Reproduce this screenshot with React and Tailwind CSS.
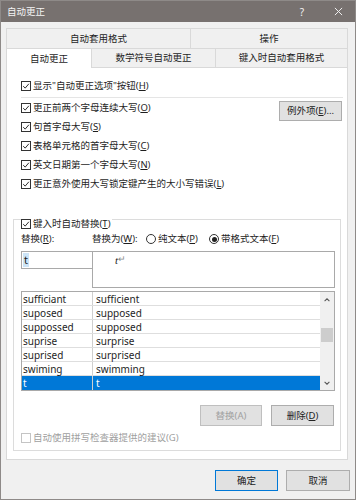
import { useState } from 'react'

const rows = [
  ['sufficiant', 'sufficient'],
  ['suposed', 'supposed'],
  ['suppossed', 'supposed'],
  ['suprise', 'surprise'],
  ['suprised', 'surprised'],
  ['swiming', 'swimming'],
  ['t', 't'],
]

function Check({ checked = true, disabled = false }) {
  return (
    <span className={`w-[10px] h-[10px] border bg-white flex items-center justify-center shrink-0 ${disabled ? 'border-[#c4c4c4]' : 'border-[#333333]'}`}>
      {checked && (
        <svg viewBox="0 0 10 10" className="w-[8px] h-[8px]">
          <path d="M1.5 5.2 L4 7.6 L8.6 2.2" fill="none" stroke="#222" strokeWidth="1.2" />
        </svg>
      )}
    </span>
  )
}

function Radio({ on = false }) {
  return (
    <span className="w-[10px] h-[10px] rounded-full border border-[#333333] bg-white flex items-center justify-center shrink-0">
      {on && <span className="w-[5px] h-[5px] rounded-full bg-[#222]" />}
    </span>
  )
}

function Option({ children, k, rest = '', checked = true, disabled = false }) {
  return (
    <div className={`h-[19px] flex items-center gap-[2px] ${disabled ? 'text-[#a0a0a0]' : ''}`}>
      <Check checked={checked} disabled={disabled} />
      <span>
        {children}(<u className="underline-offset-1">{k}</u>){rest}
      </span>
    </div>
  )
}

function Btn({ children, className = '', disabled = false }) {
  return (
    <button className={`h-[21px] bg-[#e1e1e1] border flex items-center justify-center ${disabled ? 'border-[#bfbfbf] text-[#a0a0a0]' : 'border-[#adadad] text-[#222]'} ${className}`}>
      {children}
    </button>
  )
}

export default function App() {
  const [sel, setSel] = useState(6)

  return (
    <div className="w-[356px] h-[500px] bg-[#f0f0f0] border border-[#8e8a88] flex flex-col font-['Noto_Sans','Noto_Sans_CJK_SC',sans-serif] text-[9.5px] text-[#1e1e1e] leading-none overflow-hidden">
      {/* title bar */}
      <div className="h-[21px] bg-[#77716f] text-[#f4f4f4] flex items-center pl-[6px] pr-[12px] shrink-0">
        <span className="text-[9.5px]">自动更正</span>
        <span className="ml-auto mr-[30px] text-[10px]">?</span>
        <svg viewBox="0 0 10 10" className="w-[9px] h-[9px]">
          <path d="M1 1 L9 9 M9 1 L1 9" stroke="#f0f0f0" strokeWidth="1.1" />
        </svg>
      </div>

      <div className="px-[5px] pt-[6px] flex flex-col">
        {/* tabs back row */}
        <div className="w-[342px] h-[20px] flex">
          <div className="w-[184px] border-t border-l border-[#d9d9d9] flex items-center justify-center">自动套用格式</div>
          <div className="flex-1 border-t border-l border-r border-[#d9d9d9] flex items-center justify-center">操作</div>
        </div>
        {/* tabs front row */}
        <div className="w-[342px] h-[20px] flex">
          <div className="w-[86px] bg-white border-t border-l border-r border-[#d9d9d9] flex items-center justify-center">自动更正</div>
          <div className="w-[123px] border-t border-b border-[#d9d9d9] flex items-center justify-center">数学符号自动更正</div>
          <div className="flex-1 border-t border-l border-r border-b border-[#d9d9d9] flex items-center justify-center">键入时自动套用格式</div>
        </div>

        {/* panel */}
        <div className="w-[342px] h-[392px] bg-white border border-t-0 border-[#d9d9d9] px-[6px] pt-[8px] flex flex-col">
          <div className="pl-[8px]">
            <Option k="H" rest="">显示"自动更正选项"按钮</Option>
          </div>
          <div className="ml-[8px] mr-[-2px] mt-[2px] h-px bg-[#e5e5e5]" />
          <div className="pl-[8px] flex items-start">
            <div className="flex-1 flex flex-col">
              <Option k="O">更正前两个字母连续大写</Option>
              <Option k="S">句首字母大写</Option>
              <Option k="C">表格单元格的首字母大写</Option>
              <Option k="N">英文日期第一个字母大写</Option>
              <Option k="L">更正意外使用大写锁定键产生的大小写错误</Option>
            </div>
            <Btn className="w-[63px] !h-[20px] mt-[3px] mr-[-1px]">
              <span>例外项(<u className="underline-offset-1">E</u>)...</span>
            </Btn>
          </div>

          {/* group box */}
          <div className="mt-[26px] border border-[#dcdcdc] pl-[7px] pr-[5px] pb-[5px] flex flex-col">
            <div className="-mt-[3px] h-[14px] w-fit bg-white pr-[1px] flex items-center gap-[2px]">
              <Check />
              <span>键入时自动替换(<u className="underline-offset-1">T</u>)</span>
            </div>
            <div className="mt-[1px] h-[14px] flex items-center">
              <span className="w-[71px]">替换(<u className="underline-offset-1">R</u>):</span>
              <span className="w-[54px]">替换为(<u className="underline-offset-1">W</u>):</span>
              <span className="flex items-center gap-[2px] w-[63px]">
                <Radio />
                <span>纯文本(<u className="underline-offset-1">P</u>)</span>
              </span>
              <span className="flex items-center gap-[2px]">
                <Radio on />
                <span>带格式文本(<u className="underline-offset-1">F</u>)</span>
              </span>
            </div>
            <div className="mt-[5px] flex items-start">
              <div className="w-[72px] h-[18px] border border-[#a9a9a9] flex items-center pl-[1px]">
                <span className="bg-[#cce4f7] text-[11px] leading-[14px] px-[1px]">t</span>
              </div>
              <div className="flex-1 -ml-px h-[37px] border border-[#a9a9a9] pl-[22px] pt-[2px] flex items-start">
                <span className="italic text-[11px] leading-[12px] font-['Liberation_Serif',serif]">t</span>
                <span className="text-[9px] leading-[10px] text-[#8a8a8a]">↵</span>
              </div>
            </div>

            {/* list */}
            <div className="mt-[3px] h-[100px] border border-[#a9a9a9] flex text-[10px]">
              <div className="flex-1 flex flex-col">
                {rows.map(([a, b], i) => (
                  <div
                    key={i}
                    onClick={() => setSel(i)}
                    className={`h-[14px] flex shrink-0 ${sel === i ? 'bg-[#0078d7] text-white' : 'border-b border-[#dedede]'}`}
                  >
                    <span className="w-[71px] pl-[1px] border-r border-[#cfcfcf] flex items-center">{a}</span>
                    <span className="flex-1 pl-[3px] flex items-center">{b}</span>
                  </div>
                ))}
              </div>
              <div className="w-[14px] bg-[#f0f0f0] flex flex-col items-center">
                <svg viewBox="0 0 10 10" className="w-[8px] h-[8px] mt-[4px]">
                  <path d="M2 6.5 L5 3.5 L8 6.5" fill="none" stroke="#555" strokeWidth="1.3" />
                </svg>
                <div className="mt-[24px] w-[12px] h-[14px] bg-[#cdcdcd]" />
                <div className="flex-1" />
                <svg viewBox="0 0 10 10" className="w-[8px] h-[8px] mb-[3px]">
                  <path d="M2 3.5 L5 6.5 L8 3.5" fill="none" stroke="#555" strokeWidth="1.3" />
                </svg>
              </div>
            </div>

            <div className="mt-[14px] flex justify-end gap-[9px] pr-[1px]">
              <Btn disabled className="w-[62px]">替换(A)</Btn>
              <Btn className="w-[63px]">
                <span>删除(<u className="underline-offset-1">D</u>)</span>
              </Btn>
            </div>

            <div className="mt-[5px] h-[14px] flex items-center gap-[2px] text-[#a0a0a0]">
              <Check checked={false} disabled />
              <span>自动使用拼写检查器提供的建议(G)</span>
            </div>
          </div>
        </div>

        {/* dialog buttons */}
        <div className="mt-[10px] flex justify-end gap-[8px]">
          <Btn className="w-[63px] !border-[#0078d7]">确定</Btn>
          <Btn className="w-[64px]">取消</Btn>
        </div>
      </div>
    </div>
  )
}
